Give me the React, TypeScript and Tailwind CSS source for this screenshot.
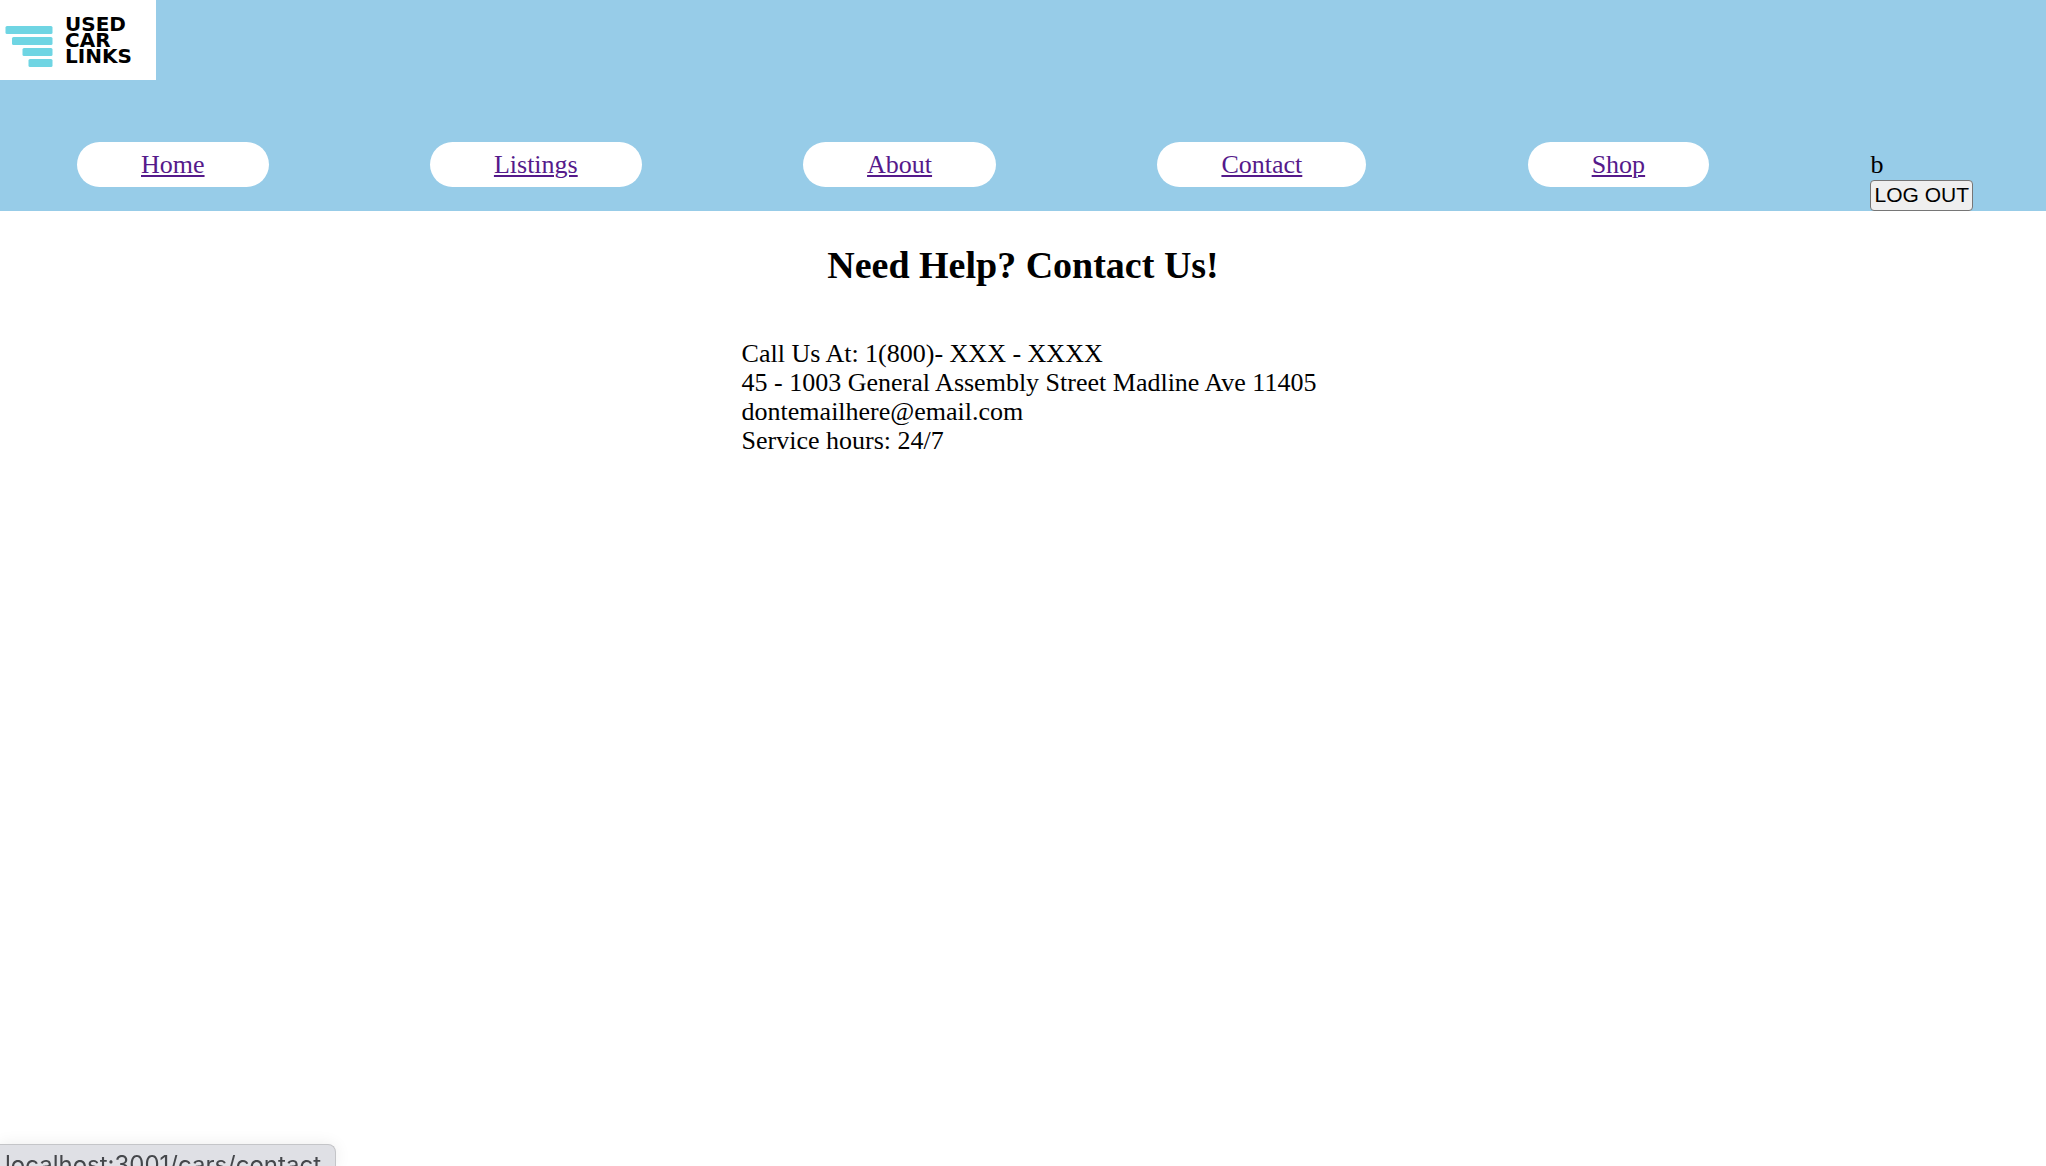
const links = [
  { label: "Home", href: "#home" },
  { label: "Listings", href: "#listings" },
  { label: "About", href: "#about" },
  { label: "Contact", href: "#contact" },
  { label: "Shop", href: "#shop" },
];

function Logo() {
  return (
    <div className="flex h-20 w-[156px] items-start bg-white pl-[5px] pt-4 text-black">
      <svg className="mt-[10px] h-[41px] w-[48px] shrink-0" viewBox="0 0 48 41" fill="#6fd5e3" aria-hidden="true">
        <rect x="0.5" y="0" width="47" height="8" rx="1.5" />
        <rect x="7" y="11" width="40.5" height="8" rx="1.5" />
        <rect x="17.5" y="22" width="30" height="8" rx="1.5" />
        <rect x="23.5" y="33" width="24" height="8" rx="1.5" />
      </svg>
      <div className="ml-3 font-['DejaVu_Sans',sans-serif] text-[20px] font-bold leading-4">
        <div>USED</div>
        <div>CAR</div>
        <div>LINKS</div>
      </div>
    </div>
  );
}

export default function App() {
  return (
    <div className="min-h-screen bg-white font-['Liberation_Serif',serif] text-[26px] leading-[29px] text-black">
      <header className="bg-[#97cce8]">
        <Logo />
        <nav className="flex items-start justify-between pl-[77px] pr-[73px] pt-[62px]">
          {links.map((link) => (
            <a
              key={link.label}
              href={link.href}
              className="rounded-[24px] bg-white px-16 py-2 text-[#551a8b] underline decoration-2 underline-offset-2"
            >
              {link.label}
            </a>
          ))}
          <div className="flex flex-col items-start pt-2">
            <span>b</span>
            <button
              type="button"
              className="mt-px h-[31px] rounded-[4px] border border-[#767676] bg-[#efefef] px-[3px] pb-[2px] font-['Liberation_Sans',sans-serif] text-[21px] leading-6"
            >
              LOG OUT
            </button>
          </div>
        </nav>
      </header>
      <main className="flex flex-col items-center">
        <h1 className="mt-8 text-[38px] font-bold leading-[44px]">Need Help? Contact Us!</h1>
        <div className="mt-[52px] pl-3">
          <p>Call Us At: 1(800)- XXX - XXXX</p>
          <p>45 - 1003 General Assembly Street Madline Ave 11405</p>
          <p>dontemailhere@email.com</p>
          <p>Service hours: 24/7</p>
        </div>
      </main>
      <div className="fixed bottom-0 left-0 h-[22px] overflow-hidden rounded-tr-lg border-r border-t border-[#c4c5c8] bg-[#dfe0e5] pl-[5px] pr-[14px] pt-[6px] font-[Inter,sans-serif] text-[24px] leading-7 text-[#45474b] shadow-[0_0_16px_rgba(0,0,0,0.08)]">
        localhost:3001/cars/contact
      </div>
    </div>
  );
}
